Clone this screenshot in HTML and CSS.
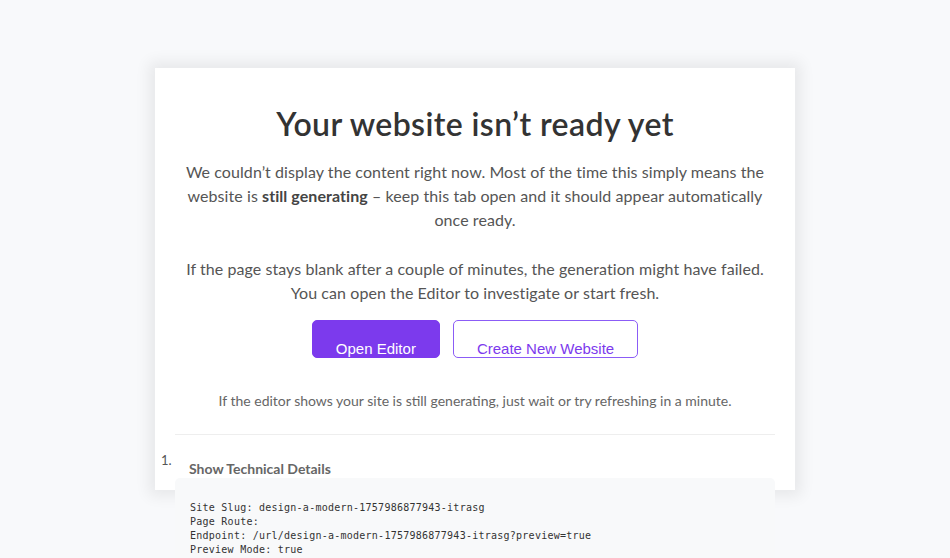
FILE: index.html
```html
<!DOCTYPE html>
<html lang="en">
<head>
<meta charset="utf-8">
<title>Your website isn't ready yet</title>
<link rel="stylesheet" href="styles.css">
</head>
<body>
<main class="card">
  <h1 class="title">Your website isn’t ready yet</h1>
  <p class="text">We couldn’t display the content right now. Most of the time this simply means the website is <strong>still generating</strong> – keep this tab open and it should appear automatically once ready.</p>
  <p class="text text-second">If the page stays blank after a couple of minutes, the generation might have failed. You can open the Editor to investigate or start fresh.</p>
  <div class="actions">
    <a class="btn btn-primary" href="#">Open Editor</a>
    <a class="btn btn-outline" href="#">Create New Website</a>
  </div>
  <p class="hint">If the editor shows your site is still generating, just wait or try refreshing in a minute.</p>
  <hr class="divider">
  <div class="details">
    <span class="marker">1.</span>
    <span class="summary">Show Technical Details</span>
  </div>
  <pre class="tech">

Site Slug: design-a-modern-1757986877943-itrasg
Page Route: 
Endpoint: /url/design-a-modern-1757986877943-itrasg?preview=true
Preview Mode: true</pre>
</main>
</body>
</html>
```

FILE: styles.css
```css
html, body {
  margin: 0;
  padding: 0;
}
body {
  background: #f8f9fb;
  font-family: Lato, "Open Sans", sans-serif;
  color: #555;
  height: 558px;
  overflow: hidden;
}
.card {
  box-sizing: border-box;
  width: 640px;
  height: 422px;
  margin: 68px auto 0;
  padding: 37px 20px 0;
  background: #fff;
  box-shadow: 0 0 14px 6px rgba(0, 0, 0, 0.07);
  display: flex;
  flex-direction: column;
  align-items: stretch;
}
.title {
  margin: 0;
  font-size: 32px;
  line-height: 38px;
  font-weight: 600;
  letter-spacing: 0.4px;
  color: #333;
  text-align: center;
}
.text {
  margin: 17px 0 0;
  font-size: 16px;
  line-height: 24px;
  letter-spacing: 0.07px;
  text-align: center;
  color: #555;
}
.text strong {
  color: #444;
  font-weight: 700;
}
.text-second {
  margin-top: 25px;
}
.actions {
  display: flex;
  justify-content: center;
  gap: 13px;
  margin-top: 15px;
}
.btn {
  box-sizing: border-box;
  height: 38px;
  padding: 19px 23px 0;
  border-radius: 5px;
  font-family: "Liberation Sans", Arial, sans-serif;
  font-size: 15px;
  line-height: 17px;
  text-decoration: none;
}
.btn-primary {
  background: #7c3aed;
  color: #fff;
  border: 1px solid #7c3aed;
}
.btn-outline {
  background: #fff;
  color: #7c3aed;
  border: 1px solid #8b5cf6;
}
.hint {
  margin: 32px 0 0;
  font-size: 14px;
  line-height: 21px;
  text-align: center;
  color: #666;
}
.divider {
  margin: 23px 0 0;
  border: 0;
  border-top: 1px solid #eeeeee;
  height: 0;
}
.details {
  display: flex;
  align-items: flex-start;
  margin: 18px 0 0 -14px;
}
.marker {
  font-size: 13px;
  line-height: 14px;
  color: #555;
  width: 28px;
}
.summary {
  margin-top: 7px;
  font-size: 14px;
  line-height: 18px;
  font-weight: 700;
  color: #666;
}
.tech {
  margin: 0;
  padding: 9px 15px 20px;
  background: #f8f9fa;
  border-radius: 5px;
  font-family: "DejaVu Sans Mono", monospace;
  font-size: 10px;
  line-height: 14px;
  letter-spacing: 0.25px;
  color: #333;
}
```
